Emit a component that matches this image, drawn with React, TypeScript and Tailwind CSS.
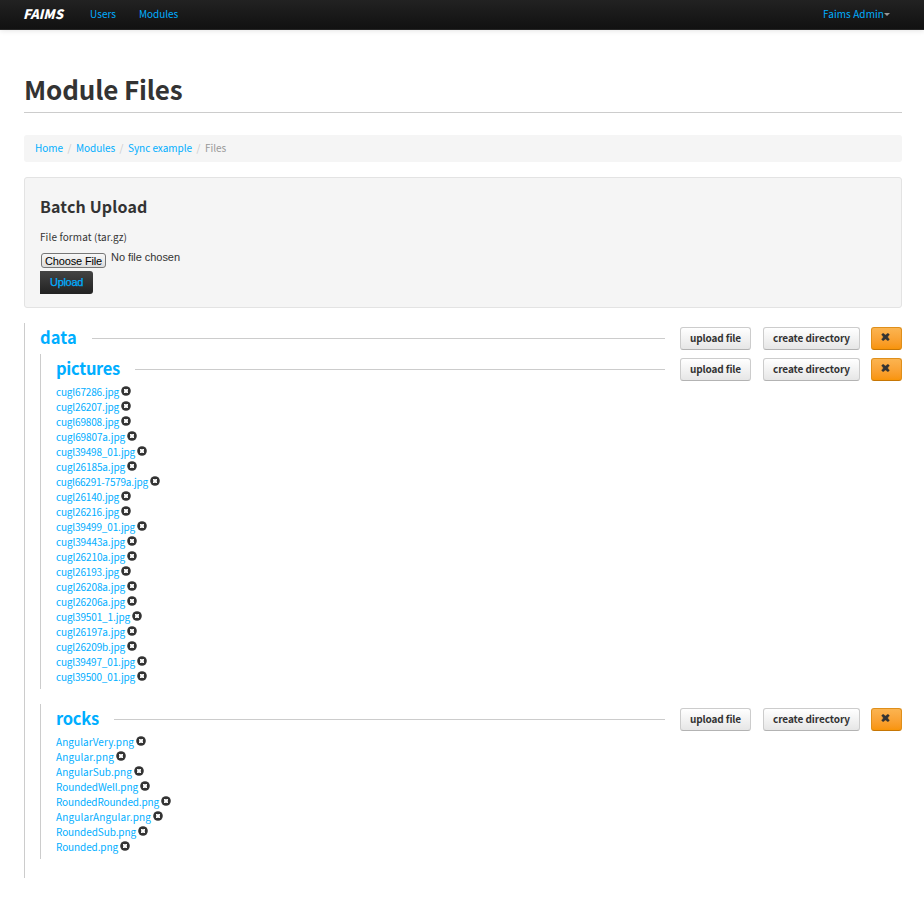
import React from "react";

type FileEntry = { name: string; width: number };

const pictures: FileEntry[] = [
  { name: "cugl67286.jpg", width: 62 },
  { name: "cugl26207.jpg", width: 62 },
  { name: "cugl69808.jpg", width: 62 },
  { name: "cugl69807a.jpg", width: 68 },
  { name: "cugl39498_01.jpg", width: 78 },
  { name: "cugl26185a.jpg", width: 68 },
  { name: "cugl66291-7579a.jpg", width: 91 },
  { name: "cugl26140.jpg", width: 62 },
  { name: "cugl26216.jpg", width: 62 },
  { name: "cugl39499_01.jpg", width: 78 },
  { name: "cugl39443a.jpg", width: 68 },
  { name: "cugl26210a.jpg", width: 68 },
  { name: "cugl26193.jpg", width: 62 },
  { name: "cugl26208a.jpg", width: 68 },
  { name: "cugl26206a.jpg", width: 68 },
  { name: "cugl39501_1.jpg", width: 73 },
  { name: "cugl26197a.jpg", width: 68 },
  { name: "cugl26209b.jpg", width: 68 },
  { name: "cugl39497_01.jpg", width: 78 },
  { name: "cugl39500_01.jpg", width: 78 },
];

const rocks: FileEntry[] = [
  { name: "AngularVery.png", width: 77 },
  { name: "Angular.png", width: 57 },
  { name: "AngularSub.png", width: 75 },
  { name: "RoundedWell.png", width: 81 },
  { name: "RoundedRounded.png", width: 102 },
  { name: "AngularAngular.png", width: 94 },
  { name: "RoundedSub.png", width: 79 },
  { name: "Rounded.png", width: 61 },
];

/* Text stretched or tightened to its column width; raised sits it one pixel higher. */
function Fit({ text, width, raised = true }: { text: string; width: number; raised?: boolean }) {
  const ref = React.useRef<HTMLSpanElement>(null);
  const [spacing, setSpacing] = React.useState(0);
  React.useLayoutEffect(() => {
    if (ref.current) {
      const natural = ref.current.getBoundingClientRect().width - spacing * text.length;
      setSpacing((width - natural) / text.length);
    }
  }, [text, width]);
  return (
    <span
      ref={ref}
      className={raised ? "inline-block -translate-y-px whitespace-nowrap" : "inline-block whitespace-nowrap"}
      style={{ letterSpacing: spacing }}
    >
      {text}
    </span>
  );
}

function RemoveBadge() {
  return (
    <svg width="10" height="10" viewBox="0 0 10 10" className="mb-[3px] ml-[2px] block shrink-0">
      <circle cx="5" cy="5" r="4.800" fill="#333" />
      <path d="M3 3h1.300l.7.500.7-.500H7v1.300l-.5.700.5.700V7H5.700L5 6.500 4.300 7H3V5.700l.5-.7-.5-.7z" fill="#fff" />
    </svg>
  );
}

function Cross() {
  return (
    <svg width="9" height="8" viewBox="0 0 9 8" className="mr-[2px] mb-[3px] block">
      <path d="M.6 1.600 2.100.200 4.500 2.100 6.900.200 8.400 1.600 6.600 4l1.800 2.400-1.500 1.400L4.500 5.900 2.100 7.800.6 6.400 2.400 4z" fill="#333" stroke="#333" strokeWidth=".4" />
    </svg>
  );
}

const greyButton =
  "flex h-[23px] items-center justify-center rounded-[3px] border border-[#ccc] border-b-[#b3b3b3] bg-linear-to-b from-white to-[#e6e6e6] text-[10px] leading-none font-bold text-[#333]";

function FolderHeader({ name, width }: { name: string; width: number }) {
  return (
    <div className="flex h-[31px] items-center">
      <a className="mr-[15px] -mt-[3px] text-[16.500px] leading-[22px] font-bold text-[#00aeff]">
        <Fit text={name} width={width} raised={false} />
      </a>
      <div className="mr-[15px] h-px flex-1 bg-[#ccc]" />
      <button className={greyButton + " mr-3 w-[71px]"}>
        <Fit text="upload file" width={51} />
      </button>
      <button className={greyButton + " mr-[11px] w-[97px]"}>
        <Fit text="create directory" width={77} />
      </button>
      <button className="flex h-[23px] w-[31px] items-center justify-center rounded-[3px] border border-[#df8f1a] border-b-[#c67605] bg-linear-to-b from-[#fbb450] to-[#f89406]">
        <Cross />
      </button>
    </div>
  );
}

function FileList({ files }: { files: FileEntry[] }) {
  return (
    <ul>
      {files.map((file) => (
        <li key={file.name} className="flex h-[15px] items-center text-[10px] leading-[15px] text-[#00aeff]">
          <Fit text={file.name} width={file.width + 1} />
          <RemoveBadge />
        </li>
      ))}
    </ul>
  );
}

export default function App() {
  return (
    <div className="h-[908px] overflow-hidden bg-white font-['Noto_Sans_CJK_SC','Open_Sans',sans-serif] text-[10px] text-[#333]">
      <nav className="flex h-[30px] items-center border-b border-[#252525] bg-linear-to-b from-[#222] to-[#111] pr-[34px] pl-[23px] leading-[20px] text-[#00aeff] shadow-[0_1px_5px_rgba(0,0,0,0.1)]">
        <span className="mr-[27px] text-[13px] font-black text-white italic">
          <Fit text="FAIMS" width={40} />
        </span>
        <a className="mr-[23px]">
          <Fit text="Users" width={26} />
        </a>
        <a>
          <Fit text="Modules" width={39} />
        </a>
        <a className="ml-auto flex items-center">
          <Fit text="Faims Admin" width={61} />
          <span className="border-x-[3px] border-t-[3px] border-x-transparent border-t-[#999]" />
        </a>
      </nav>
      <main className="pr-[22px] pl-6">
        <h1 className="flex h-[83px] items-end border-b border-[#ccc] pb-[6px] text-[26px] leading-[32px] font-bold">
          <Fit text="Module Files" width={158.5} />
        </h1>
        <div className="mt-[22px] flex h-[27px] items-center rounded-[3px] bg-[#f5f5f5] pl-[11px] text-[#00aeff]">
          <Fit text="Home" width={28} />
          <span className="w-[13px] -translate-y-px text-center text-[#ccc]">/</span>
          <Fit text="Modules" width={39} />
          <span className="w-[13px] -translate-y-px text-center text-[#ccc]">/</span>
          <Fit text="Sync example" width={64} />
          <span className="w-[13px] -translate-y-px text-center text-[#ccc]">/</span>
          <span className="text-[#999]">
            <Fit text="Files" width={21} />
          </span>
        </div>
        <section className="mt-[15px] h-[131px] rounded-[3px] border border-[#e3e3e3] bg-[#f5f5f5] px-[15px] pt-[18px]">
          <h2 className="h-[22px] text-[16px] leading-[22px] font-bold">
            <Fit text="Batch Upload" width={107.5} />
          </h2>
          <p className="mt-[12px] h-[15px] leading-[15px]">
            <Fit text="File format (tar.gz)" width={87} />
          </p>
          <div className="mt-[7px] flex h-[19px] font-['Liberation_Sans',Arial,sans-serif] text-[11px]">
            <button className="mt-[1px] ml-px flex h-[15px] w-[65px] items-center justify-center rounded-[3px] border border-[#777] bg-linear-to-b from-[#f8f8f8] to-[#ddd] pt-px leading-[13px] text-black">
              <Fit text="Choose File" width={57} raised={false} />
            </button>
            <span className="ml-[5px] -mt-px leading-[13px]">
              <Fit text="No file chosen" width={69} raised={false} />
            </span>
          </div>
          <button className="flex h-[23px] w-[53px] items-center justify-center rounded-r-[3px] bg-linear-to-b from-[#444] to-[#222] font-['Liberation_Sans',Arial,sans-serif] text-[11px] text-[#00aeff] [-webkit-text-stroke:0.25px_#00aeff]">
            <Fit text="Upload" width={33} raised={false} />
          </button>
        </section>
        <section className="mt-[15px] h-[555px] border-l border-[#ccc] pl-[15px]">
          <FolderHeader name="data" width={37} />
          <div className="h-[335px] border-l border-[#ccc] pl-[15px]">
            <FolderHeader name="pictures" width={64} />
            <FileList files={pictures} />
          </div>
          <div className="mt-[15px] h-[155px] border-l border-[#ccc] pl-[15px]">
            <FolderHeader name="rocks" width={43} />
            <FileList files={rocks} />
          </div>
        </section>
      </main>
    </div>
  );
}
